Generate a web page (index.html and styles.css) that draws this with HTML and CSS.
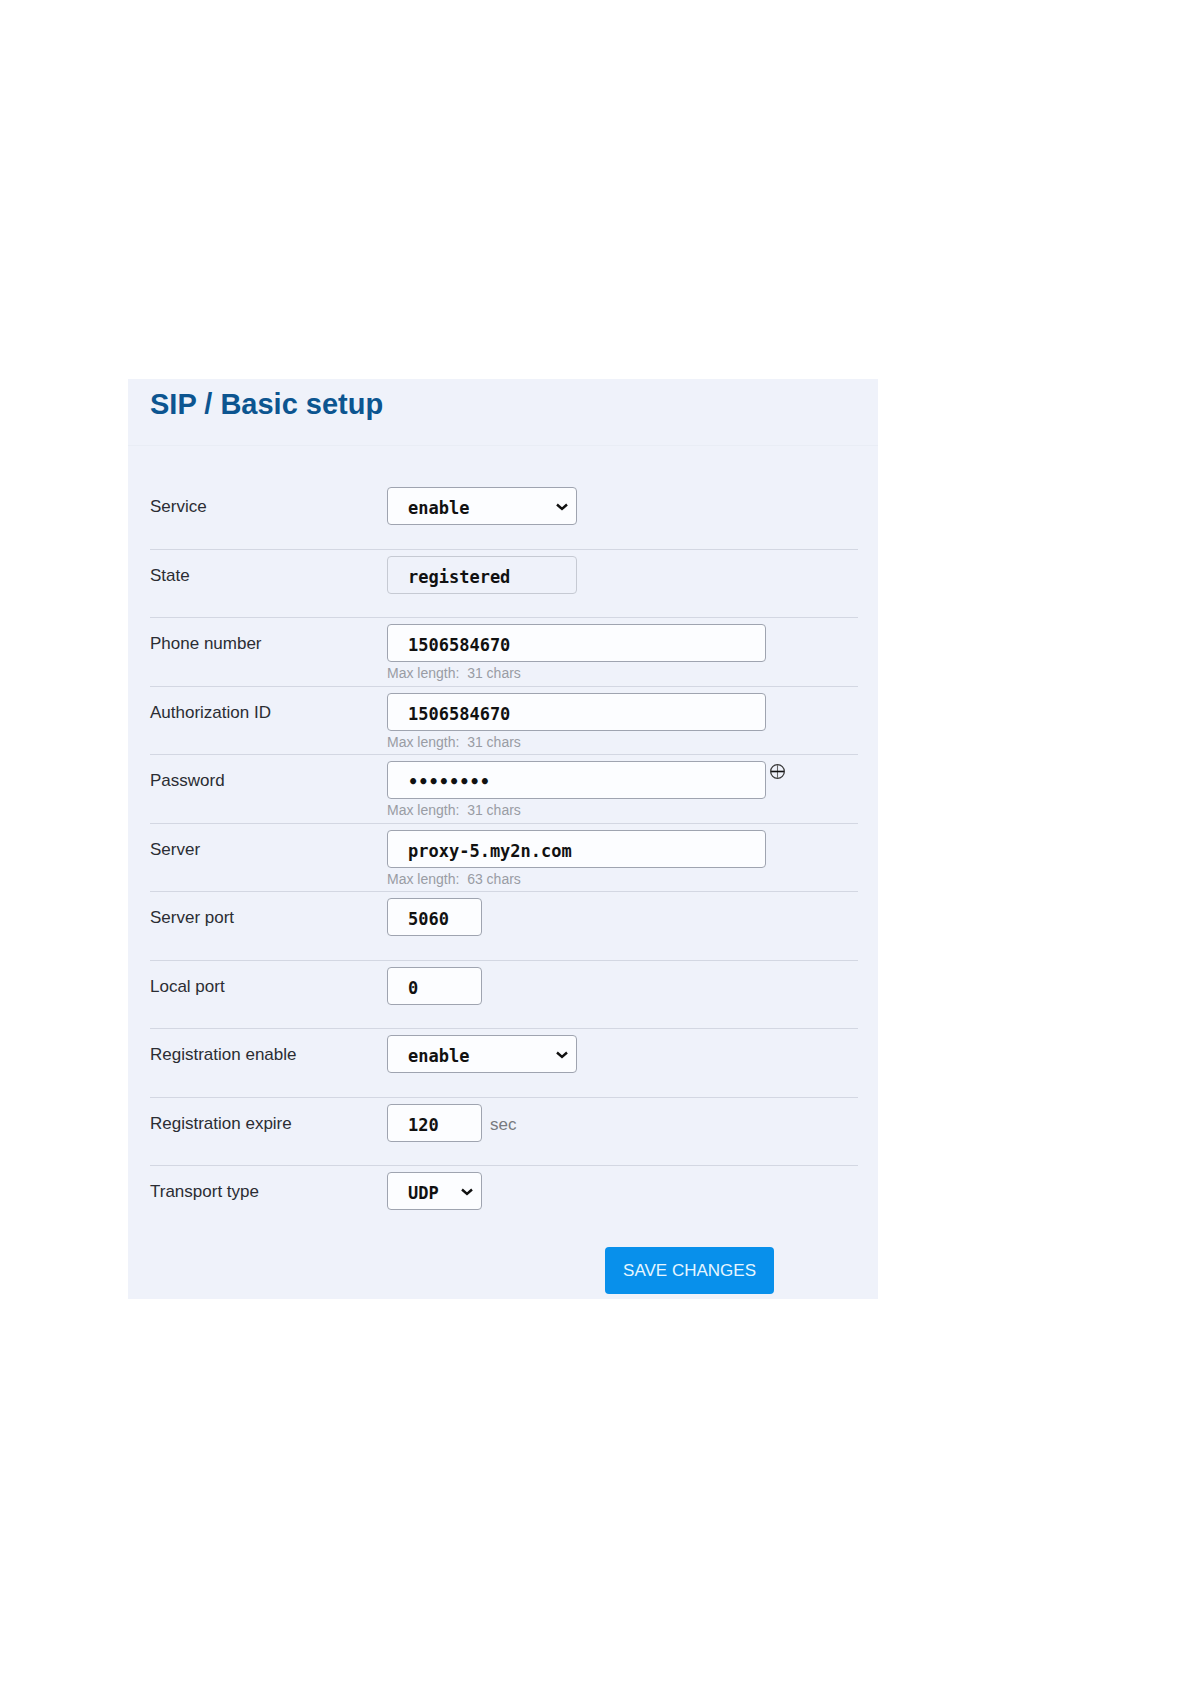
FILE: index.html
```html
<!DOCTYPE html>
<html lang="en">
<head>
<meta charset="utf-8">
<meta name="viewport" content="width=device-width, initial-scale=1">
<title>SIP / Basic setup</title>
<link rel="stylesheet" href="styles.css">
</head>
<body>
<main class="panel">
  <header class="panel-header">
    <h1 class="title">SIP / Basic setup</h1>
  </header>
  <form class="form">
    <div class="rows">
      <div class="row">
        <label class="label" for="service">Service</label>
        <div class="field">
          <div class="select medium">
            <select class="control" id="service"><option>enable</option><option>disable</option></select>
            <svg class="chevron" viewBox="0 0 12 8" aria-hidden="true"><path d="M1 1.5l5 4.5 5-4.5"/></svg>
          </div>
        </div>
      </div>
      <div class="row">
        <label class="label" for="state">State</label>
        <div class="field">
          <input class="control medium readonly" id="state" type="text" value="registered" readonly>
        </div>
      </div>
      <div class="row">
        <label class="label" for="phone">Phone number</label>
        <div class="field">
          <input class="control wide" id="phone" type="text" maxlength="31" value="1506584670">
          <p class="hint">Max length:&nbsp; 31 chars</p>
        </div>
      </div>
      <div class="row">
        <label class="label" for="auth">Authorization ID</label>
        <div class="field">
          <input class="control wide" id="auth" type="text" maxlength="31" value="1506584670">
          <p class="hint">Max length:&nbsp; 31 chars</p>
        </div>
      </div>
      <div class="row">
        <label class="label" for="password">Password</label>
        <div class="field">
          <input class="control wide" id="password" type="password" maxlength="31" value="password">
          <button class="reveal" type="button" aria-label="Show password">
            <svg class="reveal-icon" viewBox="0 0 14 14" aria-hidden="true"><circle cx="7" cy="7" r="6.4"/><path class="stem" d="M7 1v12"/><path class="bar" d="M1 7h12"/></svg>
          </button>
          <p class="hint">Max length:&nbsp; 31 chars</p>
        </div>
      </div>
      <div class="row">
        <label class="label" for="server">Server</label>
        <div class="field">
          <input class="control wide" id="server" type="text" maxlength="63" value="proxy-5.my2n.com">
          <p class="hint">Max length:&nbsp; 63 chars</p>
        </div>
      </div>
      <div class="row">
        <label class="label" for="server-port">Server port</label>
        <div class="field">
          <input class="control small" id="server-port" type="text" value="5060">
        </div>
      </div>
      <div class="row">
        <label class="label" for="local-port">Local port</label>
        <div class="field">
          <input class="control small" id="local-port" type="text" value="0">
        </div>
      </div>
      <div class="row">
        <label class="label" for="registration">Registration enable</label>
        <div class="field">
          <div class="select medium">
            <select class="control" id="registration"><option>enable</option><option>disable</option></select>
            <svg class="chevron" viewBox="0 0 12 8" aria-hidden="true"><path d="M1 1.5l5 4.5 5-4.5"/></svg>
          </div>
        </div>
      </div>
      <div class="row">
        <label class="label" for="expire">Registration expire</label>
        <div class="field">
          <input class="control small" id="expire" type="text" value="120">
          <span class="unit">sec</span>
        </div>
      </div>
      <div class="row">
        <label class="label" for="transport">Transport type</label>
        <div class="field">
          <div class="select small">
            <select class="control" id="transport"><option>UDP</option><option>TCP</option><option>TLS</option></select>
            <svg class="chevron" viewBox="0 0 12 8" aria-hidden="true"><path d="M1 1.5l5 4.5 5-4.5"/></svg>
          </div>
        </div>
      </div>
    </div>
    <div class="actions">
      <button class="save" type="submit">SAVE CHANGES</button>
    </div>
  </form>
</main>
</body>
</html>
```
FILE: styles.css
```css
*, *::before, *::after {
  box-sizing: border-box;
}

body {
  margin: 0;
  padding: 379px 128px;
  background: #fff;
  color: #2b2d33;
  font: 17px/20px "Liberation Sans", Arial, sans-serif;
}

.panel {
  max-width: 750px;
  background: #eff2fa;
}

.panel-header {
  padding: 9px 23px 25px 22px;
  border-bottom: 1px solid #e9edf5;
}

.title {
  margin: 0;
  color: #0c5590;
  font-size: 29px;
  line-height: 32px;
}

.form {
  padding: 35px 20px 5px 22px;
}

.rows {
  display: grid;
  grid-auto-rows: 69px 68px;
}

.row {
  display: grid;
  grid-template-columns: 237px 1fr;
  padding-top: 6px;
  border-bottom: 1px solid #d3d7e2;
}

.row:last-child {
  border-bottom: 0;
}

.label {
  padding-top: 10px;
}

.field {
  display: flex;
  flex-wrap: wrap;
  align-content: flex-start;
}

.control {
  width: 100%;
  height: 38px;
  margin: 0;
  padding: 4px 20px 0;
  border: 1px solid #9fa4b0;
  border-radius: 4px;
  background: #fcfdff;
  color: #111;
  font: bold 17px/20px "DejaVu Sans Mono", monospace;
  appearance: none;
}

.readonly {
  border-color: #c6cad3;
  background: #eff2fa;
}

.small {
  width: 95px;
}

.medium {
  width: 190px;
}

.wide {
  width: 379px;
}

.select {
  position: relative;
}

.chevron {
  position: absolute;
  top: 16px;
  right: 9px;
  width: 12px;
  height: 8px;
  fill: none;
  stroke: #111;
  stroke-width: 2.4;
  pointer-events: none;
}

.hint {
  flex-basis: 100%;
  margin: 1px 0 0;
  color: #999ca4;
  font-size: 14px;
  line-height: 20px;
}

.unit {
  padding: 11px 8px 7px;
  color: #777a80;
}

.reveal {
  display: flex;
  align-self: flex-start;
  margin: 3px 0 0 4px;
  padding: 0;
  border: 0;
  background: none;
}

.reveal-icon {
  width: 15px;
  height: 15px;
  fill: none;
  stroke: #3a3a3a;
  stroke-width: 1.2;
}

.reveal-icon .bar {
  stroke: #111;
  stroke-width: 1.5;
}

.reveal-icon .stem {
  stroke: #666;
  stroke-width: 1;
}

.actions {
  display: flex;
  justify-content: flex-end;
  padding: 12px 84px 0 0;
}

.save {
  height: 47px;
  padding: 0 18px;
  border: 0;
  border-radius: 4px;
  background: #0890eb;
  color: #e6f6ff;
  font: 17px/20px "Liberation Sans", Arial, sans-serif;
}
```
